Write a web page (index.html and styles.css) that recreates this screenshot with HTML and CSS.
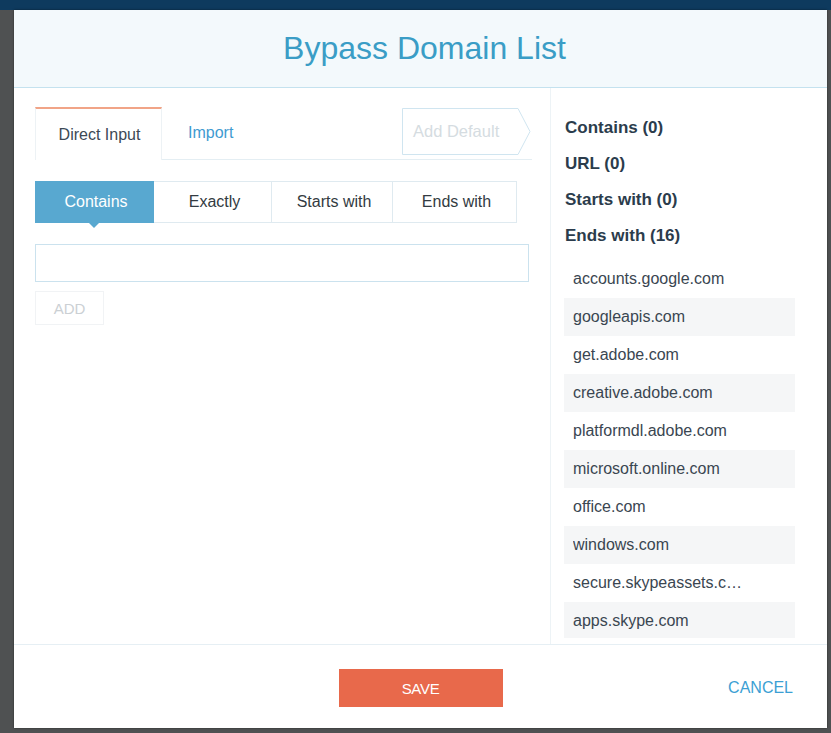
FILE: index.html
```html
<!DOCTYPE html>
<html lang="en">
<head>
<meta charset="utf-8">
<title>Bypass Domain List</title>
<link rel="stylesheet" href="styles.css">
</head>
<body>
<div class="topbar"></div>
<div class="stage">
  <div class="modal">
    <header class="modal-head">
      <h1 class="modal-title">Bypass Domain List</h1>
    </header>

    <div class="modal-body">
      <section class="editor">
        <div class="tabs">
          <div class="tab tab-active">Direct Input</div>
          <div class="tab tab-link">Import</div>
          <div class="tabs-spacer"></div>
          <button class="add-default" type="button" disabled>
            <svg class="add-default-shape" width="130" height="47" viewBox="0 0 130 47">
              <polygon points="0.5,0.5 116,0.5 128,23.5 116,46.5 0.5,46.5" fill="#fff" stroke="#d0e5f0" stroke-width="1"/>
            </svg>
            <span class="add-default-label">Add Default</span>
          </button>
        </div>

        <div class="match-types">
          <button class="match match-active" type="button">Contains</button>
          <button class="match" type="button">Exactly</button>
          <button class="match" type="button">Starts with</button>
          <button class="match" type="button">Ends with</button>
        </div>

        <input class="domain-input" type="text">
        <button class="add-btn" type="button" disabled>ADD</button>
      </section>

      <aside class="summary">
        <div class="group-title">Contains (0)</div>
        <div class="group-title">URL (0)</div>
        <div class="group-title">Starts with (0)</div>
        <div class="group-title">Ends with (16)</div>
        <ul class="domain-list">
          <li><span>accounts.google.com</span></li>
          <li><span>googleapis.com</span></li>
          <li><span>get.adobe.com</span></li>
          <li><span>creative.adobe.com</span></li>
          <li><span>platformdl.adobe.com</span></li>
          <li><span>microsoft.online.com</span></li>
          <li><span>office.com</span></li>
          <li><span>windows.com</span></li>
          <li><span>secure.skypeassets.com</span></li>
          <li><span>apps.skype.com</span></li>
          <li><span>skype.com</span></li>
          <li><span>live.com</span></li>
          <li><span>outlook.com</span></li>
          <li><span>sharepoint.com</span></li>
          <li><span>lync.com</span></li>
          <li><span>onenote.com</span></li>
        </ul>
      </aside>
    </div>

    <footer class="modal-foot">
      <span></span>
      <button class="save-btn" type="button">SAVE</button>
      <button class="cancel-btn" type="button">CANCEL</button>
    </footer>
  </div>
</div>
</body>
</html>
```

FILE: styles.css
```css
* { box-sizing: border-box; }

html, body {
  margin: 0;
  padding: 0;
  height: 100%;
}

body {
  background: #4f5152;
  font-family: "Liberation Sans", Arial, sans-serif;
  overflow: hidden;
}

.topbar {
  height: 10px;
  background: #0e3a5e;
}

.stage {
  padding-left: 14px;
}

.modal {
  width: 813px;
  height: 718px;
  background: #fff;
  display: flex;
  flex-direction: column;
  box-shadow: 0 0 2px rgba(0, 0, 0, 0.5);
}

/* header */
.modal-head {
  height: 78px;
  background: #f3f9fc;
  border-bottom: 1px solid #c4e2ef;
  display: flex;
  align-items: center;
  justify-content: center;
}

.modal-title {
  margin: 0;
  font-size: 32px;
  font-weight: normal;
  color: #3a9dc6;
  padding: 0 0 0 8px;
}

/* body */
.modal-body {
  height: 557px;
  display: flex;
  border-bottom: 1px solid #e6eff4;
}

.editor {
  width: 537px;
  padding: 19px 0 0 21px;
  border-right: 1px solid #edf3f6;
}

.tabs {
  width: 497px;
  height: 53px;
  display: flex;
  align-items: stretch;
  border-bottom: 1px solid #e4eef3;
}

.tab {
  display: flex;
  align-items: center;
  font-size: 16px;
}

.tab-active {
  width: 127px;
  justify-content: center;
  padding: 0 0 0 2px;
  color: #3c4955;
  border-top: 2px solid #f1a487;
  border-left: 1px solid #edf2f5;
  border-right: 1px solid #edf2f5;
  margin-bottom: -1px;
  background: #fff;
}

.tab-link {
  color: #3f9bd1;
  padding-left: 26px;
}

.tabs-spacer { flex: 1; }

.add-default {
  align-self: flex-start;
  margin-top: 1px;
  padding: 0;
  border: 0;
  background: none;
  display: grid;
  width: 130px;
  height: 47px;
  font: inherit;
}

.add-default-shape,
.add-default-label {
  grid-area: 1 / 1;
}

.add-default-label {
  align-self: center;
  justify-self: start;
  padding-left: 11px;
  font-size: 16.5px;
  color: #d5dce1;
}

.match-types {
  margin-top: 21px;
  width: 482px;
  display: grid;
  grid-template-columns: 119px 118px 121px 124px;
  height: 42px;
}

.match {
  font: inherit;
  font-size: 16px;
  color: #333b42;
  background: #fff;
  border: 1px solid #dfeaf0;
  border-left: 0;
  padding: 0 0 0 4px;
}

.match-active {
  position: relative;
  background: #58a8d0;
  border-color: #58a8d0;
  color: #fff;
}

/* pointer under the selected match type */
.match-active::after {
  content: "";
  position: absolute;
  left: 50%;
  bottom: -6px;
  margin-left: -6px;
  border-left: 6px solid transparent;
  border-right: 6px solid transparent;
  border-top: 6px solid #58a8d0;
}

.domain-input {
  display: block;
  margin-top: 21px;
  width: 494px;
  height: 38px;
  border: 1px solid #cbe2ee;
  background: #fff;
  outline: none;
}

.add-btn {
  display: block;
  margin-top: 9px;
  width: 69px;
  height: 34px;
  font: inherit;
  font-size: 15px;
  color: #cbd0d4;
  background: #fff;
  border: 1px solid #f1f3f5;
}

/* right column */
.summary {
  flex: 1;
  padding: 22px 32px 0 14px;
}

.group-title {
  height: 36px;
  line-height: 36px;
  font-size: 17px;
  font-weight: bold;
  color: #2b3c4c;
}

.domain-list {
  list-style: none;
  margin: 6px 0 0 -1px;
  padding: 0;
  height: 378px;
  overflow: hidden;
}

.domain-list li {
  height: 38px;
  line-height: 38px;
  padding-left: 9px;
  font-size: 16px;
  color: #3a4651;
}

.domain-list li:nth-child(even) {
  background: #f5f6f7;
}

.domain-list span {
  display: inline-block;
  max-width: 172px;
  overflow: hidden;
  white-space: nowrap;
  text-overflow: ellipsis;
  vertical-align: top;
}

/* footer */
.modal-foot {
  flex: 1;
  display: grid;
  grid-template-columns: 1fr auto 1fr;
  align-items: center;
  align-content: start;
  padding: 24px 34px 0 34px;
}

.save-btn {
  width: 164px;
  height: 38px;
  border: 0;
  background: #e8694b;
  color: #fff;
  font: inherit;
  font-size: 15px;
  letter-spacing: -0.3px;
}

.cancel-btn {
  justify-self: end;
  padding: 0;
  border: 0;
  background: none;
  font: inherit;
  font-size: 16px;
  color: #3c9fd4;
}
```
